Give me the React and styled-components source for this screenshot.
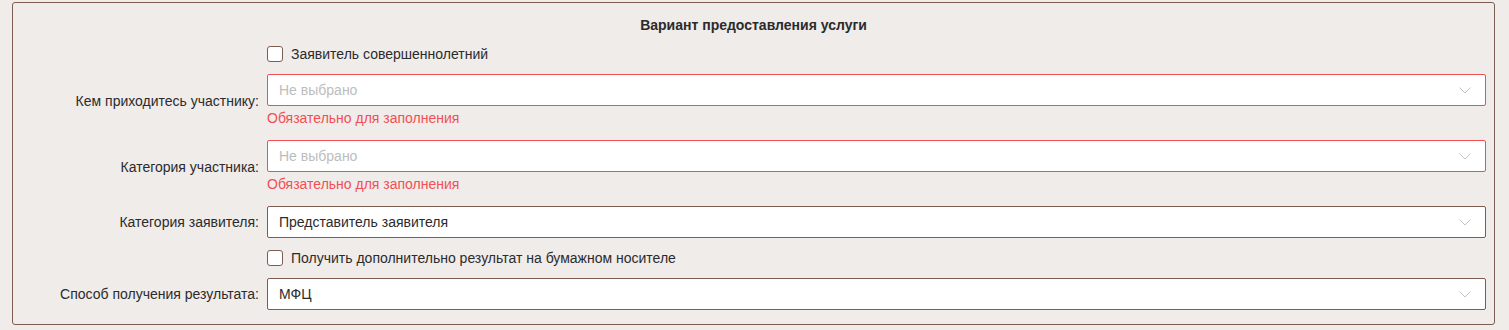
import React from 'react'
import styled, { createGlobalStyle } from 'styled-components'

const GlobalStyle = createGlobalStyle`
  html, body {
    margin: 0;
    padding: 0;
    background: #f0ecea;
  }
  body {
    font-family: "Liberation Sans", Arial, sans-serif;
    font-size: 14px;
    color: #2b2b2b;
  }
`

const Panel = styled.section`
  margin: 2px 14px 0 12px;
  border: 1px solid #7d5d52;
  border-radius: 3px;
  background: #f0ecea;
  padding: 13px 8px 14px 0;
  display: flex;
  flex-direction: column;
  gap: 12px;
`

const Title = styled.h3`
  margin: 0;
  padding-left: 8px;
  font-size: 14px;
  font-weight: 700;
  line-height: 18px;
  text-align: center;
  color: #2b2b2b;
`

const Row = styled.div`
  display: grid;
  grid-template-columns: 246px 1fr;
  column-gap: 8px;
  align-items: center;
`

const Label = styled.label`
  text-align: right;
  line-height: 18px;
  color: #2b2b2b;
`

const Field = styled.div`
  grid-column: 2;
  display: flex;
  flex-direction: column;
`

const Select = styled.div`
  height: 32px;
  box-sizing: border-box;
  border: 1px solid ${({ $error }) => ($error ? '#f24f55' : '#7d5d52')};
  border-radius: 2px;
  background: #fff;
  display: flex;
  align-items: center;
  padding: 0 14px 0 11px;
  color: ${({ $placeholder }) => ($placeholder ? '#bdbdbd' : '#2b2b2b')};
`

const Value = styled.span`
  flex: 1;
`

const Error = styled.div`
  margin-top: 2px;
  line-height: 20px;
  color: #f24f55;
`

const CheckRow = styled.label`
  grid-column: 2;
  display: flex;
  align-items: center;
  gap: 8px;
  height: 16px;
  line-height: 16px;
`

const Box = styled.span`
  width: 16px;
  height: 16px;
  box-sizing: border-box;
  border: 1px solid #7d5d52;
  border-radius: 3px;
  background: #fff;
`

const Chevron = () => (
  <svg width="12" height="7" viewBox="0 0 12 7" fill="none">
    <path d="M0.5 0.5L6 6L11.5 0.5" stroke="#c4c4c4" strokeWidth="1" />
  </svg>
)

const SelectField = ({ label, value, error }) => (
  <Row>
    <Label>{label}</Label>
    <Field>
      <Select $error={error} $placeholder={!value}>
        <Value>{value || 'Не выбрано'}</Value>
        <Chevron />
      </Select>
      {error && <Error>Обязательно для заполнения</Error>}
    </Field>
  </Row>
)

const CheckField = ({ text }) => (
  <Row>
    <CheckRow>
      <Box />
      {text}
    </CheckRow>
  </Row>
)

const App = () => {
  return (
    <>
      <GlobalStyle />
      <Panel>
        <Title>Вариант предоставления услуги</Title>
        <CheckField text="Заявитель совершеннолетний" />
        <SelectField label="Кем приходитесь участнику:" error />
        <SelectField label="Категория участника:" error />
        <SelectField label="Категория заявителя:" value="Представитель заявителя" />
        <CheckField text="Получить дополнительно результат на бумажном носителе" />
        <SelectField label="Способ получения результата:" value="МФЦ" />
      </Panel>
    </>
  )
}

export default App
